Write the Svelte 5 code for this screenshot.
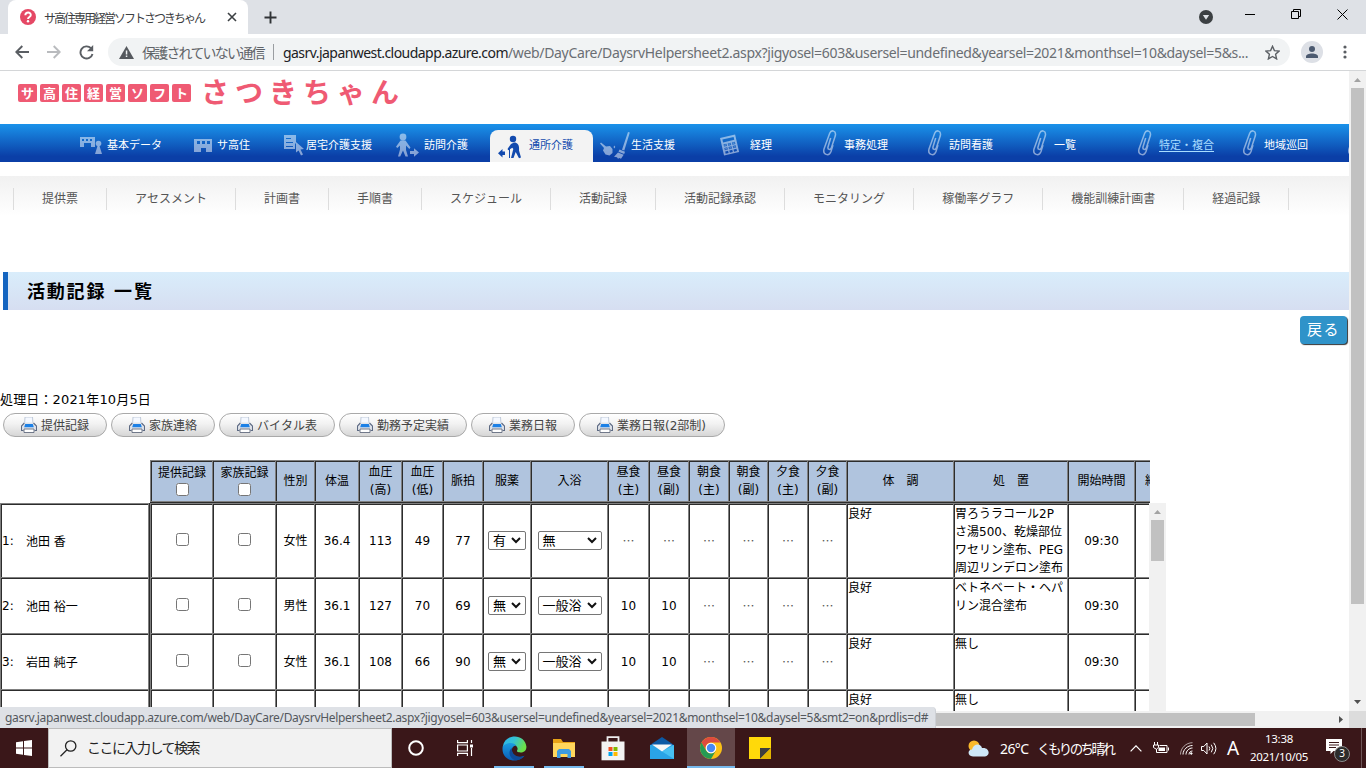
<script>
  const logoTiles = [...'サ高住経営ソフト'];

  const nav = [
    { label: '基本データ', icon: 'data', ix: 10, tx: 37 },
    { label: 'サ高住', icon: 'building', ix: 19, tx: 42 },
    { label: '居宅介護支援', icon: 'form', ix: 4, tx: 26 },
    { label: '訪問介護', icon: 'visit', ix: 11, tx: 39 },
    { label: '通所介護', icon: 'walker', ix: 8, tx: 39, active: true },
    { label: '生活支援', icon: 'broom', ix: 5, tx: 36 },
    { label: '経理', icon: 'calc', ix: 20, tx: 50 },
    { label: '事務処理', icon: 'clip', ix: 17, tx: 39 },
    { label: '訪問看護', icon: 'clip', ix: 17, tx: 39 },
    { label: '一覧', icon: 'clip', ix: 17, tx: 39 },
    { label: '特定・複合', icon: 'clip', ix: 17, tx: 39, hover: true },
    { label: '地域巡回', icon: 'clip', ix: 17, tx: 39 },
    { label: '', icon: 'clip', ix: 17, tx: 39 }
  ];

  const subnav = ['提供票', 'アセスメント', '計画書', '手順書', 'スケジュール', '活動記録', '活動記録承認', 'モニタリング', '稼働率グラフ', '機能訓練計画書', '経過記録'];

  const reports = [
    { label: '提供記録', w: 104 },
    { label: '家族連絡', w: 104 },
    { label: 'バイタル表', w: 116 },
    { label: '勤務予定実績', w: 128 },
    { label: '業務日報', w: 104 },
    { label: '業務日報(2部制)', w: 146 }
  ];

  const heads = [
    ['性別'], ['体温'], ['血圧', '(高)'], ['血圧', '(低)'], ['脈拍'], ['服薬'], ['入浴'],
    ['昼食', '(主)'], ['昼食', '(副)'], ['朝食', '(主)'], ['朝食', '(副)'], ['夕食', '(主)'], ['夕食', '(副)'],
    ['体　調'], ['処　置'], ['開始時間']
  ];

  const rows = [
    { no: 1, name: '池田 香', vitals: ['女性', '36.4', '113', '49', '77'], med: '有', bath: '無', meals: ['…', '…', '…', '…', '…', '…'], state: '良好', care: ['胃ろうラコール2P', 'さ湯500、乾燥部位', 'ワセリン塗布、PEG', '周辺リンデロン塗布'], start: '09:30' },
    { no: 2, name: '池田 裕一', vitals: ['男性', '36.1', '127', '70', '69'], med: '無', bath: '一般浴', meals: ['10', '10', '…', '…', '…', '…'], state: '良好', care: ['ベトネベート・ヘパ', 'リン混合塗布'], start: '09:30' },
    { no: 3, name: '岩田 純子', vitals: ['女性', '36.1', '108', '66', '90'], med: '無', bath: '一般浴', meals: ['10', '10', '…', '…', '…', '…'], state: '良好', care: ['無し'], start: '09:30' }
  ];
</script>

{#snippet navIcon(name)}
  {#if name === 'data'}
    <svg width="22" height="20" viewBox="0 0 22 20"><path fill-rule="evenodd" d="M0 2h15v10h-4V8H4v4H0zM2 4v2h2V4zm4 0v2h2V4zm4 0v2h2V4z" /><circle cx="18.500" cy="8.500" r="2.800" /><path d="M17.500 11h2l2.500 8h-7z" /></svg>
  {:else if name === 'building'}
    <svg width="19" height="16" viewBox="0 0 19 16"><path fill-rule="evenodd" d="M0 2h18v13h-6v-4H7v4H0zM3 4v3h3V4zm5 0v3h3V4zm5 0v3h3V4z" /></svg>
  {:else if name === 'form'}
    <svg width="21" height="22" viewBox="0 0 21 22"><path fill-rule="evenodd" d="M0 1h12v8l-1 1v5H0zM2 4v1h5V4zm0 4v1h7V8zm0 4v1h7v-1z" /><path d="m12 8 8 7-3.500.4 2.500 5-2 1-2.400-5-2.600 2z" /></svg>
  {:else if name === 'visit'}
    <svg width="23" height="25" viewBox="0 0 23 25"><circle cx="7" cy="4" r="3.400" /><path d="M4.500 7.500h5l5 7-1.200 1.500L10 12.500v4.500l2 6.500H9.500l-2.500-6-2.800 6H2l2-7v-4L1.300 15 0 13.800z" /><path d="M14 18h4v-2.800l5 4.300-5 4.300V21h-4z" /></svg>
  {:else if name === 'walker'}
    <svg width="24" height="24" viewBox="0 0 24 24"><path d="M7 16.500H4.500V14L0 18.200l4.500 4.300V20H7z" /><circle cx="15" cy="4" r="3.200" /><path d="M16 7.500c4 0 5.500 3 5 8l2 7-2 .8-3.300-6.300-2.200 6H13l2.300-9-1-1.300-4 2.500-.8-1.300 3.500-5zM11 13h1v10h-1z" /></svg>
  {:else if name === 'broom'}
    <svg width="30" height="29" viewBox="0 0 30 29"><path d="m0 12.500 1-1 5 4 4-.5 2.500 3v4l-3 2.500-4-1-2.500-4 1-2.500zM28 1l1.800.5-5.500 18-2.300-.7zM13.500 16l1-1.500.8 1.500-1 1.500zM19.500 18.500l5.500 2.200-.8 2.300-5.700-2.300zM18 21.500l5.700 2.300-2.700 4-1.600-.8-1.400.8-1-1.500-3-.6z" /></svg>
  {:else if name === 'calc'}
    <svg width="20" height="23" viewBox="0 0 20 23"><path fill-rule="evenodd" transform="translate(0 4) rotate(-13)" d="M0 0h15.500v18H0zM2 2v3h11.500V2zM2 7v2.300h3V7zm4.300 0v2.300h3V7zm4.300 0v2.300h3V7zM2 10.700V13h3v-2.300zm4.300 0V13h3v-2.300zm4.300 0V13h3v-2.300zM2 14.300v2.300h3v-2.300zm4.300 0v2.300h3v-2.300zm4.300 0v2.300h3v-2.300z" /><path transform="translate(0 4) rotate(-13)" opacity=".6" d="M2.500 7.500h2v1.300h-2zm4.300 0h2v1.300h-2zm4.300 0h2v1.300h-2zM2.500 11.200h2v1.300h-2zm4.300 0h2v1.300h-2zm4.300 0h2v1.300h-2z" /></svg>
  {:else}
    <svg class="line" width="16" height="26" viewBox="0 0 16 26"><path d="M8.700 8 6 17c-.6 2.600 2.500 3.500 3.400.8l3.900-12c1.200-5.200-4-6.500-5.600-2.500L2 19c-1.500 5.800 5 7.800 7 2.500l2-6.500" /></svg>
  {/if}
{/snippet}

{#snippet printer()}
  <svg width="16" height="16" viewBox="0 0 16 16"><path d="M4 0h7.500l.5 8H3.500z" fill="#f4f8ff" stroke="#b4bfd0" stroke-width=".8" /><path d="M3.500 5.500 1 8.500.5 9v4.500h2l.5 2h10l.5-2h2V9l-2.500-3.500z" fill="#dfe3ea" /><path d="M3.300 6 .5 9v4.500h2M12.500 6l3 3v4.500h-2" fill="none" stroke="#5d6a83" stroke-width="1.100" /><path d="M4.200 7h7.600l1 3.300H3.200z" fill="#1c80e6" /><path d="M3 12h10v3.500H3z" fill="#fff" stroke="#626b7e" stroke-width=".9" /></svg>
{/snippet}

{#snippet dropdown(value, wide)}
  <span class="select" class:wide>{value}<svg width="10" height="7" viewBox="0 0 10 7"><path d="m1 1 4 4 4-4" fill="none" stroke="#111" stroke-width="2" /></svg></span>
{/snippet}

<div class="screen">
  <div class="tabstrip">
    <div class="tab">
      <svg class="fav" width="16" height="16" viewBox="0 0 16 16"><circle cx="8" cy="8" r="8" fill="#e54865" /><path d="M5.300 6.200C5.500 2.600 11 2.800 10.800 6c0 2-2.800 2-2.800 4" fill="none" stroke="#fff" stroke-width="1.900" /><circle cx="8" cy="12.300" r="1.200" fill="#fff" /></svg>
      <span class="title">サ高住専用経営ソフトさつきちゃん</span>
      <svg width="10" height="10" viewBox="0 0 10 10"><path d="m1 1 8 8m0-8-8 8" stroke="#3c4043" stroke-width="1.600" /></svg>
    </div>
    <svg class="plus" width="13" height="13" viewBox="0 0 13 13"><path d="M6.500.5v12m-6-6h12" stroke="#303336" stroke-width="1.900" /></svg>
    <div class="winctl">
      <svg width="14" height="14" viewBox="0 0 14 14"><circle cx="7" cy="7" r="7" fill="#3c4043" /><path d="M3.800 5h6.400L7 9.800z" fill="#dee1e6" /></svg>
      <svg width="10" height="10" viewBox="0 0 10 10"><path d="M0 5.500h10" stroke="#000" /></svg>
      <svg width="10" height="10" viewBox="0 0 10 10"><path d="M.5 2.500h7v7h-7zM2.500 2.500v-2h7v7h-2" fill="none" stroke="#000" /></svg>
      <svg width="11" height="11" viewBox="0 0 11 11"><path d="m.5.500 10 10m0-10-10 10" stroke="#000" /></svg>
    </div>
  </div>

  <div class="toolbar">
    <svg width="14" height="14" viewBox="0 0 14 14"><path d="M14 7H1.500M7.300 1 1.300 7l6 6" fill="none" stroke="#5a5e63" stroke-width="1.900" /></svg>
    <svg width="14" height="14" viewBox="0 0 14 14"><path d="M0 7h12.500M6.700 1l6 6-6 6" fill="none" stroke="#b9bbbe" stroke-width="1.900" /></svg>
    <svg width="15" height="15" viewBox="0 0 15 15"><path d="M12 3.200A6.100 6.100 0 1 0 13.500 9" fill="none" stroke="#5a5e63" stroke-width="1.900" /><path d="M14.200 0v6.200H8z" fill="#5a5e63" /></svg>
    <div class="omni">
      <svg width="15" height="13" viewBox="0 0 15 13"><path d="M7.500 0 15 13H0z" fill="#55595e" /><path d="M6.800 4.500h1.500V8.500H6.800zm0 5h1.500V11H6.800z" fill="#f1f3f4" /></svg>
      <span class="insecure">保護されていない通信</span>
      <i></i>
      <span class="host">gasrv.japanwest.cloudapp.azure.com</span><span class="path">/web/DayCare/DaysrvHelpersheet2.aspx?jigyosel=603&amp;usersel=undefined&amp;yearsel=2021&amp;monthsel=10&amp;daysel=5&amp;s...</span>
      <svg class="star" width="15" height="15" viewBox="0 0 15 15"><path d="m7.500 1.300 1.900 4.300 4.700.5-3.500 3.200 1 4.600-4.100-2.400-4.100 2.400 1-4.600L.9 6.100l4.700-.5z" fill="none" stroke="#5a5e63" stroke-width="1.400" /></svg>
    </div>
    <svg class="avatar" width="22" height="22" viewBox="0 0 22 22"><circle cx="11" cy="11" r="11" fill="#dde0e6" /><circle cx="11" cy="8" r="3" fill="#4c5a70" /><path d="M5 17v-1.500c0-4 12-4 12 0V17z" fill="#4c5a70" /></svg>
    <svg width="4" height="14" viewBox="0 0 4 14" fill="#5a5e63"><circle cx="2" cy="2" r="1.600" /><circle cx="2" cy="7" r="1.600" /><circle cx="2" cy="12" r="1.600" /></svg>
  </div>

  <div class="view">
    <main>
      <div class="logo">
        <div class="tiles">{#each logoTiles as t}<b>{t}</b>{/each}</div>
        <strong>さつきちゃん</strong>
      </div>

      <nav class="main">
        {#each nav as n}
          <div class="item" class:active={n.active} class:hover={n.hover}>
            <div class="ico" style="width:{n.tx}px;padding-left:{n.ix}px">{@render navIcon(n.icon)}</div>
            <span>{n.label}</span>
          </div>
        {/each}
      </nav>

      <nav class="sub">{#each subnav as s}<span>{s}</span>{/each}</nav>

      <h1>活動記録 一覧</h1>
      <div class="back"><button>戻る</button></div>
      <p class="date">処理日：2021年10月5日</p>
      <div class="reports">
        {#each reports as r}<div class="pill" style="width:{r.w}px">{@render printer()}<span>{r.label}</span></div>{/each}
      </div>

      <div class="grid head">
        <div class="c chk">提供記録<input type="checkbox" /></div>
        <div class="c chk">家族記録<input type="checkbox" /></div>
        {#each heads as h}
          <div class="c">{#each h as line}<span>{line}</span>{/each}</div>
        {/each}
        <div class="c last">終了時間</div>
      </div>

      <div class="body">
        <div class="names">
          {#each rows as r}<div class="n"><span>{r.no}:</span>{r.name}</div>{/each}
          <div class="n"></div>
        </div>
        <div class="grid data">
          {#each rows as r}
            <div class="c"><input type="checkbox" /></div>
            <div class="c"><input type="checkbox" /></div>
            {#each r.vitals as v}<div class="c">{v}</div>{/each}
            <div class="c">{@render dropdown(r.med, false)}</div>
            <div class="c">{@render dropdown(r.bath, true)}</div>
            {#each r.meals as m}<div class="c" class:dots={m === '…'}>{m}</div>{/each}
            <div class="c top">{r.state}</div>
            <div class="c top">{#each r.care as line}<span>{line}</span>{/each}</div>
            <div class="c">{r.start}</div>
            <div class="c"></div>
          {/each}
          {#each Array(15) as _}<div class="c"></div>{/each}
          <div class="c top">良好</div>
          <div class="c top">無し</div>
          <div class="c"></div>
          <div class="c"></div>
        </div>
        <div class="innerbar">
          <svg width="7" height="4" viewBox="0 0 7 4"><path d="M0 4 3.500 0 7 4z" fill="#a3a3a3" /></svg>
          <div></div>
        </div>
      </div>
    </main>
    <div class="vbar">
      <svg width="7" height="4" viewBox="0 0 7 4"><path d="M0 4 3.500 0 7 4z" fill="#a3a3a3" /></svg>
      <div></div>
      <svg class="dn" width="7" height="4" viewBox="0 0 7 4"><path d="M0 0h7L3.500 4z" fill="#505050" /></svg>
    </div>
  </div>
  <div class="hbar">
    <div class="thumb"></div>
    <svg width="4" height="7" viewBox="0 0 4 7"><path d="M0 0v7l4-3.500z" fill="#505050" /></svg>
    <div class="corner"></div>
  </div>
  <div class="status"><span>gasrv.japanwest.cloudapp.azure.com/web/DayCare/DaysrvHelpersheet2.aspx?jigyosel=603&amp;usersel=undefined&amp;yearsel=2021&amp;monthsel=10&amp;daysel=5&amp;smt2=on&amp;prdlis=d#</span></div>

  <div class="taskbar">
    <div class="start"><svg width="16" height="16" viewBox="0 0 16 16" fill="#fff"><path d="M0 2.200 7 1.200V7.500H0zM8 1l8-1v7.500H8zM0 8.500h7v6.300L0 13.800zM8 8.500h8V16l-8-1.100z" /></svg></div>
    <div class="search">
      <svg width="17" height="17" viewBox="0 0 17 17" fill="none" stroke="#222" stroke-width="1.300"><circle cx="10.700" cy="6" r="5.200" /><path d="M7 9.800.5 16.300" /></svg>
      <span>ここに入力して検索</span>
    </div>
    <div class="app"><svg width="16" height="16" viewBox="0 0 16 16"><circle cx="8" cy="8" r="6.800" fill="none" stroke="#fff" stroke-width="2" /></svg></div>
    <div class="app"><svg width="16" height="16" viewBox="0 0 16 16" fill="none" stroke="#fff" stroke-width="1.200"><path d="M.6 0v2.700h9.800V0M.6 16v-2.700h9.800V16M.6 5h9.800v6H.6zM14.500 0v3m0 5v8" /><path d="M13 4.500h3v3h-3z" fill="#fff" stroke="none" /></svg></div>
    <div class="app on">
      <svg width="25" height="25" viewBox="0 0 25 25"><defs><linearGradient id="e1" x1="0" y1="0" x2="1" y2=".4"><stop offset="0" stop-color="#2bb3ee" /><stop offset=".5" stop-color="#35c1d4" /><stop offset="1" stop-color="#6be04a" /></linearGradient><linearGradient id="e2" x1="0" y1="0" x2="0" y2="1"><stop offset="0" stop-color="#1b9de2" /><stop offset="1" stop-color="#0a5cb5" /></linearGradient></defs><path d="M.8 10.500C3-3 23-3 24.400 10.500c.3 5-4 6.500-7.500 5.800-3.400-.7-1.300-1.800-1.300-3.600C15 7.500 6 6.500.8 10.500z" fill="url(#e1)" /><path d="M.7 10.500C5 5.500 13 6.500 14 9.500c-4 .2-5.500 5-2.800 8.500 2.600 3.500 7 3.600 11.300 1.700C15 28.500-1.500 25 .7 10.500z" fill="url(#e2)" /><path d="M9.800 12c-5 4.500-1 12.300 5 12.300 3.500-.4 6-2 7.700-4.600-6 2.700-13-.5-12.700-7.700z" fill="#0e4a98" /></svg>
    </div>
    <div class="app on">
      <svg width="22" height="19" viewBox="0 0 22 19"><path d="M0 0h8l2 3h12v15H0z" fill="#e8a317" /><path d="M0 4h22v14H0z" fill="#ffd65c" /><path d="M4 19v-7l2-2h10l2 2v7h-3.500v-4h-7v4z" fill="#3d9be0" /></svg>
    </div>
    <div class="app">
      <svg width="24" height="25" viewBox="0 0 24 25"><path d="M6.500 6V1.200h11V6" fill="none" stroke="#eee" stroke-width="1.800" /><path d="M.5 5.500h23v18.800H.5z" fill="#f3f3f3" /><path d="M7.500 11h4v4h-4z" fill="#f25022" /><path d="M12.500 11h4v4h-4z" fill="#7fba00" /><path d="M7.500 16h4v4h-4z" fill="#00a4ef" /><path d="M12.500 16h4v4h-4z" fill="#ffb900" /></svg>
    </div>
    <div class="app">
      <svg width="24" height="22" viewBox="0 0 24 22"><path d="M0 8 12 0l12 8v2H0z" fill="#0c59a4" /><path d="M0 8h24v14H0z" fill="#2aa3e6" /><path d="M24 8v14L12 14.500z" fill="#48c0f2" /><path d="M2 7.500h20L12 14.500z" fill="#f7f7f7" /></svg>
    </div>
    <div class="app cur">
      <svg width="22" height="22" viewBox="0 0 22 22"><circle cx="11" cy="11" r="11" fill="#fbc116" /><path d="M1.500 5.500A11 11 0 0 1 20.500 5.500H11a5.500 5.500 0 0 0-4.800 8.200z" fill="#dd4b3e" /><path d="M1.500 5.500A11 11 0 0 0 11 22l4.800-8.300A5.500 5.500 0 0 1 6.200 13.700z" fill="#259b55" /><circle cx="11" cy="11" r="5.300" fill="#fff" /><circle cx="11" cy="11" r="4.200" fill="#4889f4" /></svg>
    </div>
    <div class="app"><svg width="22" height="22" viewBox="0 0 22 22"><path d="M0 0h22v22H0z" fill="#ffd90a" /><path d="M11 11h11L11 22z" fill="#3e3e3e" /><path d="M22 11v11H11z" fill="#e2b500" /></svg></div>
    <div class="tray">
      <svg class="weather" width="21" height="17" viewBox="0 0 21 17"><circle cx="6" cy="6" r="5.500" fill="#f9b92b" /><path d="M5 16.500C-1 16-.5 9.500 4 9.500 5.500 3 13 3 14 8c8-1 8.500 8 3 8.500z" fill="#cfe8f8" /></svg>
      <span class="temp">26°C</span><span class="wx">くもりのち晴れ</span>
      <svg class="up" width="12" height="7" viewBox="0 0 12 7"><path d="m.6 6.400 5.400-5.600 5.400 5.600" fill="none" stroke="#fff" stroke-width="1.200" /></svg>
      <svg class="bat" width="16" height="13" viewBox="0 0 16 13"><path d="M6.500 3.500H14v7H3.500V9M15.500 5.500v3" fill="none" stroke="#fff" /><path d="M5.500 5.500H12v3.500H5.500z" fill="#fff" /><path d="M1.500 0v3M4.500 0v3M.5 3h5v2.500L3.500 7v3M.5 3v2.500L3 7" fill="none" stroke="#fff" /></svg>
      <svg class="wifi" width="13" height="13" viewBox="0 0 13 13" fill="none" stroke="#fff"><path d="M.5 12.500C.5 6 6 .7 12.500.7" opacity=".6" /><path d="M3 12.500c0-5 4.500-9 9.500-9M6 12.500c0-3.500 3-6.500 6.500-6.500M9 12.500c0-2 1.500-3.500 3.500-3.500" /><circle cx="11.300" cy="11.500" r=".8" fill="#fff" /></svg>
      <svg class="vol" width="16" height="13" viewBox="0 0 16 13" fill="none" stroke="#fff"><path d="M.5 4.500h2.300L6 1v11L2.800 8.500H.5zM8 4.500q1.600 2 0 4M10.300 2.700q3 3.800 0 7.600M12.700.8q4.400 5.700 0 11.400" /></svg>
      <span class="ime">A</span>
      <div class="clock"><span>13:38</span><span>2021/10/05</span></div>
      <div class="note"><svg width="16" height="15" viewBox="0 0 16 15"><path d="M0 0h16v12H7.500l-3 3v-3H0z" fill="#fff" /><path d="M3 3.500h10M3 6h10M3 8.500h7" stroke="#3a1719" /></svg><b>3</b></div>
      <div class="peek"></div>
    </div>
  </div>
</div>

<style>
  :global(body) { margin: 0; overflow: hidden; }
  * { box-sizing: border-box; }
  svg { display: block; flex: none; }
  .screen { position: relative; width: 1366px; height: 768px; display: flex; flex-direction: column; overflow: hidden; background: #fff; font: 12px "DejaVu Sans", "Noto Sans CJK JP", sans-serif; color: #000; white-space: nowrap; font-kerning: none; }

  .tabstrip { height: 34px; flex: none; background: #dee1e6; display: flex; align-items: center; padding-left: 8px; }
  .tab { width: 240px; height: 34px; background: #fff; border-radius: 8px 8px 0 0; display: flex; align-items: center; padding-left: 12px; }
  .title { font: 12px "Noto Sans CJK JP", sans-serif; color: #3c4043; width: 183px; margin-left: 8px; letter-spacing: -2px; padding-right: 23px; }
  .plus { margin-left: 16px; }
  .winctl { margin-left: auto; display: flex; align-items: center; padding-right: 18px; gap: 36px; height: 28px; align-self: flex-start; }
  .winctl svg:first-child { margin: 6px -4px 0 0; }

  .toolbar { height: 37px; flex: none; border-bottom: 1px solid #d4d6d8; display: flex; align-items: center; padding-left: 15px; gap: 18px; }
  .omni { width: 1182px; height: 28px; margin-left: -4px; border-radius: 14px; background: #f1f3f4; display: flex; align-items: center; padding-left: 11px; font: 14px "Noto Sans", sans-serif; }
  .insecure { font: 14px "Noto Sans CJK JP", sans-serif; color: #5f6368; margin-left: 8px; width: 122px; letter-spacing: -1.8px; }
  .omni i { width: 1px; height: 16px; background: #9a9da1; margin: 0 9px 0 9px; }
  .host { color: #202124; width: 225px; letter-spacing: -.55px; }
  .path { color: #6a6e73; width: 743px; letter-spacing: -.34px; }
  .star { margin-left: 14px; }
  .avatar { margin-left: -7px; }
  .avatar + svg { margin-left: 2px; }

  .view { height: 640px; flex: none; display: flex; }
  main { width: 1349px; overflow: hidden; }
  .logo { height: 53px; display: flex; align-items: flex-start; padding-left: 18px; }
  .tiles { display: flex; gap: 3px; padding-top: 13px; }
  .tiles b { width: 19px; height: 18px; border-radius: 2px; background: #ef5a73; color: #fff; font: bold 13px/17px "Noto Sans CJK JP", sans-serif; text-align: center; }
  .logo strong { margin: 2px 0 0 10px; font: bold 28px/36px "Noto Sans CJK JP", sans-serif; letter-spacing: 6px; color: #ef5a73; }

  nav.main { height: 38px; background: linear-gradient(#1a92ea, #0b3fa7 85%); display: flex; align-items: flex-end; padding-left: 70px; width: 1349px; overflow: hidden; }
  .item { width: 105px; height: 38px; flex: none; display: flex; align-items: center; color: #fff; font: 11px "Noto Sans CJK JP", sans-serif; fill: rgba(255, 255, 255, .5); padding-top: 4px; }
  .item span { margin-top: -2px; }
  .item .line { fill: none; stroke: rgba(255, 255, 255, .5); stroke-width: 1.500; margin-top: -4px; }
  .ico { flex: none; }
  .item.active { width: 103px; height: 32px; margin-right: 2px; border-radius: 8px 8px 0 0; background: #f3f3f3; color: #124aae; fill: #124aae; padding: 0 0 2px; }
  .item.active .ico { padding-top: 3px; }
  .item.hover { color: #a9dcff; }
  .item.hover span { text-decoration: underline; text-underline-offset: 2px; }

  nav.sub { margin-top: 14px; height: 40px; background: linear-gradient(#f1f1f1, #fff); display: flex; align-items: center; padding: 5px 0 0 13px; color: #555; }
  nav.sub span { height: 22px; line-height: 23px; padding: 0 28px; border-left: 1px solid #ddd; }
  nav.sub span:last-child { border-right: 1px solid #ddd; }

  h1 { margin: 56px 0 0 3px; height: 38px; border-left: 5px solid #1565c0; background: linear-gradient(#d9edfb, #d6def1); font: bold 18px/36px "Noto Sans CJK JP", sans-serif; letter-spacing: 1.800px; padding-left: 19px; word-spacing: 2px; }
  .back { display: flex; justify-content: flex-end; padding: 6px 2px 0 0; }
  .back button { width: 47px; height: 28px; padding: 0 0 4px; border: 0; border-radius: 4px; background: #2f93c9; color: #fff; font: 15px "Noto Sans CJK JP", sans-serif; letter-spacing: 1.500px; box-shadow: 1px 1px 1px #333; }
  .date { margin: 46px 0 0; height: 18px; line-height: 20px; font-size: 13px; letter-spacing: .15px; }
  .reports { display: flex; gap: 4px; padding: 5px 0 0 3px; }
  .pill { height: 24px; border: 1px solid #a9a9a9; border-radius: 12px; background: linear-gradient(#fff, #f2f2f2 45%, #d6d6d6); display: flex; align-items: center; gap: 4px; padding-left: 17px; color: #444; }
  .pill span { margin-top: -2px; }

  .grid { display: grid; grid-template-columns: 62px 63px 39px 44px 43px 41px 40px 48px 77px 41px 40px 40px 39px 40px 39px 107px 114px 67px 66px; }
  .c, .n { border: solid #808080; border-width: 1px 0 0 1px; box-shadow: inset 1px 1px 0 #2c2c2c; }
  .c { display: flex; flex-direction: column; align-items: center; justify-content: center; padding-left: 1px; line-height: 18px; overflow: hidden; }
  .c input { margin: 0; width: 13px; height: 13px; }
  .head { margin: 23px 0 0 150px; width: 1000px; height: 43px; overflow: hidden; border-bottom: 1px solid #2c2c2c; background: #b0c4de; }
  .head .c { border-bottom: 1px solid #808080; font-size: 12px; }
  .chk input { margin: 1px 0 2px; }
  .head .last { align-items: flex-start; padding-left: 10px; }
  .body { display: flex; height: 208px; overflow: hidden; }
  .names { width: 150px; display: grid; grid-template-rows: 74px 56px 56px 56px; border-right: 1px solid #2c2c2c; flex: none; }
  .n { display: flex; align-items: center; padding-left: 1px; border-right: 1px solid #808080; }
  .n span { width: 24px; }
  .data { width: 999px; flex: none; overflow: hidden; grid-template-rows: 74px 56px 56px 56px; }
  .data .c { padding-top: 1px; }
  .data .c input { margin-top: -4px; }
  .dots { color: #555; font-family: "Noto Sans CJK JP", sans-serif; }
  .data .top { align-items: flex-start; justify-content: flex-start; padding-top: 1px; }
  .select { width: 38px; height: 19px; border: 1px solid #767676; border-radius: 2px; display: flex; align-items: center; justify-content: space-between; padding: 0 4px; font-size: 13px; margin-bottom: 1px; }
  .select.wide { width: 64px; }
  .innerbar { width: 17px; background: #f1f1f1; flex: none; padding: 7px 2px 0; }
  .innerbar svg { margin-left: 3px; }
  .innerbar div { height: 41px; background: #c1c1c1; margin-top: 6px; }

  .vbar { width: 17px; background: #f1f1f1; padding: 7px 2px 0; }
  .vbar svg { margin-left: 3px; }
  .vbar div { height: 516px; margin-top: 6px; background: #c1c1c1; }
  .vbar .dn { margin-top: 96px; }
  .hbar { height: 17px; flex: none; background: #f1f1f1; display: flex; align-items: center; }
  .thumb { width: 1238px; height: 13px; margin-left: 17px; background: #c1c1c1; }
  .hbar svg { margin-left: 84px; }
  .corner { width: 17px; height: 17px; background: #dcdcdc; margin-left: auto; }
  .status { position: absolute; left: 0; top: 707px; width: 936px; height: 21px; background: #dee1e6; border-radius: 0 4px 0 0; border: solid #cdd0d5; border-width: 0 1px 0 0; padding-left: 5px; font: 12px/21px "Noto Sans", sans-serif; letter-spacing: -.31px; color: #54585d; }

  .taskbar { height: 40px; background: #3a1719; display: flex; color: #fff; font-family: "Noto Sans", "Noto Sans CJK JP", sans-serif; }
  .start { width: 48px; display: flex; align-items: center; justify-content: center; }
  .search { width: 344px; height: 40px; background: #f2f2f2; border: 1px solid #bcbcbc; display: flex; align-items: center; padding-left: 11px; gap: 10px; color: #222; font: 14px "Noto Sans CJK JP", sans-serif; letter-spacing: -1.500px; }
  .search span { margin-top: -2px; }
  .app { width: 48px; height: 40px; display: flex; align-items: center; justify-content: center; margin-right: 1.200px; }
  .app.on, .app.cur { border-bottom: 2px solid #76b9ed; padding-top: 2px; }
  .app.on { width: 40px; margin: 0 5.200px 0 4px; }
  .app.cur { background: #644749; }
  .tray { margin-left: auto; display: flex; align-items: center; }
  .temp { margin-left: 11px; width: 29px; font-size: 14px; letter-spacing: -.600px; }
  .wx { margin-left: 8px; width: 76px; font: 13.500px "Noto Sans CJK JP", sans-serif; letter-spacing: -2.600px; }
  .up { margin-left: 17px; }
  .bat { margin-left: 11px; }
  .wifi { margin-left: 11px; }
  .vol { margin-left: 8px; }
  .ime { margin-left: 10px; width: 12px; font-size: 19px; line-height: 38px; }
  .clock { width: 60px; margin-left: 10px; display: flex; flex-direction: column; align-items: center; font-size: 11.500px; line-height: 18px; letter-spacing: -.3px; }
  .note { position: relative; margin: 0 0 3px 17px; }
  .note b { position: absolute; left: 8px; top: 7px; width: 16px; height: 16px; border-radius: 50%; background: #2c2c2c; border: 1px solid #8c8c8c; font: 10px/13px "Noto Sans", sans-serif; text-align: center; }
  .peek { width: 5px; height: 40px; margin-left: 19px; border-left: 1px solid #6e5557; }
</style>
